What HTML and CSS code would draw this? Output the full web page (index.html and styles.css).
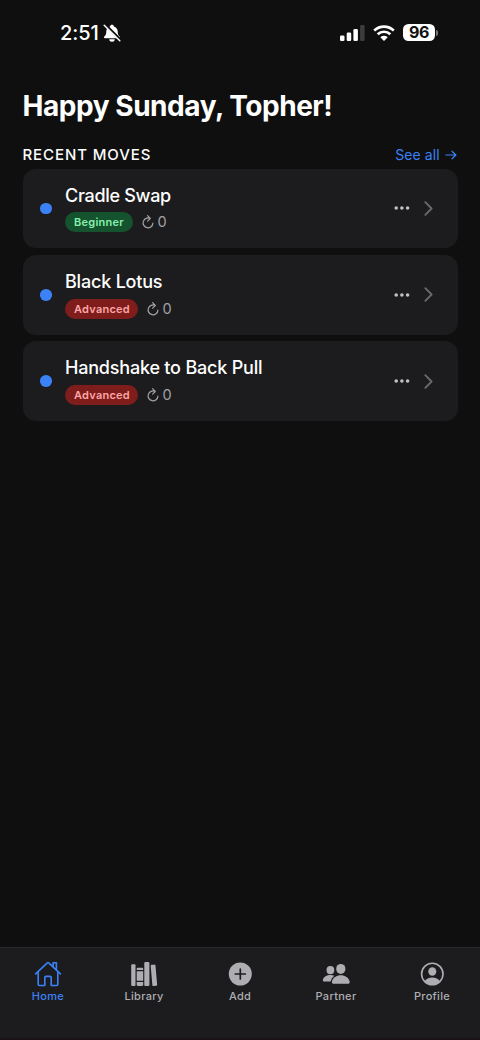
FILE: index.html
```html
<!DOCTYPE html>
<html lang="en">
<head>
<meta charset="utf-8">
<title>Home</title>
<link rel="stylesheet" href="styles.css">
</head>
<body>
<div class="app">
  <header class="status">
    <div class="clock"><span class="time">2:51</span>
      <svg class="bell" viewBox="0 0 18 18"><path d="M9 .8c-1 0-1.800.6-1.900 1.600C4.800 3.200 3.300 5 3.300 7.300c0 3.400-.9 4-2 5.300-.7.900-.3 1.700.7 1.700h14c1 0 1.400-.8.7-1.700-1.100-1.300-2-1.900-2-5.300 0-2.300-1.500-4.100-3.800-4.900C10.800 1.400 10 .8 9 .8zM6.300 15.200a2.700 2.500 0 0 0 5.400 0z" fill="#fff"/><path d="M1.900.5 17.200 15.800" stroke="#0f0f0f" stroke-width="3"/><path d="M1.200 1.200 16.800 16.800" stroke="#fff" stroke-width="1.500" stroke-linecap="round"/></svg>
    </div>
    <div class="signals">
      <svg class="bars" viewBox="0 0 25 16"><g fill="#fff"><rect x="0" y="10.500" width="4.500" height="5.500" rx="1.300"/><rect x="6.700" y="7.500" width="4.500" height="8.500" rx="1.300"/><rect x="13.400" y="4" width="4.500" height="12" rx="1.300"/></g><rect x="20.100" y="0" width="4.500" height="16" rx="1.300" fill="#3d3d3e"/></svg>
      <svg class="wifi" viewBox="0 0 22 16"><g fill="none" stroke="#fff" stroke-width="2.700"><path d="M1.200 5.600a14 14 0 0 1 19.600 0"/><path d="M4.700 9.300a9 9 0 0 1 12.600 0"/></g><path d="M7.300 12.300a5.400 5.400 0 0 1 7.400 0L11 16z" fill="#fff"/></svg>
      <div class="battery"><span class="level">96</span><i class="cap"></i></div>
    </div>
  </header>

  <main class="content">
    <h1 class="greeting">Happy Sunday, Topher!</h1>
    <div class="section-head">
      <h2 class="section-title">RECENT MOVES</h2>
      <a class="see-all">See all <svg class="arrow" viewBox="0 0 12 10"><path d="M.8 5h10M7 1.200 10.900 5 7 8.800" fill="none" stroke="currentColor" stroke-width="1.200" stroke-linecap="round" stroke-linejoin="round"/></svg></a>
    </div>
    <div class="moves">
      <article class="move">
        <i class="dot"></i>
        <div class="info">
          <h3 class="name cradle">Cradle Swap</h3>
          <div class="meta"><span class="badge beginner">Beginner</span><svg class="reload" viewBox="0 0 12 14"><path d="M8.200 3.500A4.900 4.900 0 1 0 10.900 8.100M5.600.7l2.700 2.800-2.700 2.600" fill="none" stroke="currentColor" stroke-width="1.200" stroke-linecap="round" stroke-linejoin="round"/></svg><span class="count">0</span></div>
        </div>
        <svg class="more" viewBox="0 0 16 4"><circle cx="2.200" cy="2" r="1.800"/><circle cx="7.900" cy="2" r="1.800"/><circle cx="13.600" cy="2" r="1.800"/></svg>
        <svg class="chevron" viewBox="0 0 9 15"><path d="m1.300 1.200 6.300 6.300-6.300 6.300"/></svg>
      </article>
      <article class="move">
        <i class="dot"></i>
        <div class="info">
          <h3 class="name lotus">Black Lotus</h3>
          <div class="meta"><span class="badge advanced">Advanced</span><svg class="reload" viewBox="0 0 12 14"><path d="M8.200 3.500A4.900 4.900 0 1 0 10.900 8.100M5.600.7l2.700 2.800-2.700 2.600" fill="none" stroke="currentColor" stroke-width="1.200" stroke-linecap="round" stroke-linejoin="round"/></svg><span class="count">0</span></div>
        </div>
        <svg class="more" viewBox="0 0 16 4"><circle cx="2.200" cy="2" r="1.800"/><circle cx="7.900" cy="2" r="1.800"/><circle cx="13.600" cy="2" r="1.800"/></svg>
        <svg class="chevron" viewBox="0 0 9 15"><path d="m1.300 1.200 6.300 6.300-6.300 6.300"/></svg>
      </article>
      <article class="move">
        <i class="dot"></i>
        <div class="info">
          <h3 class="name handshake">Handshake to Back Pull</h3>
          <div class="meta"><span class="badge advanced">Advanced</span><svg class="reload" viewBox="0 0 12 14"><path d="M8.200 3.500A4.900 4.900 0 1 0 10.900 8.100M5.600.7l2.700 2.800-2.700 2.600" fill="none" stroke="currentColor" stroke-width="1.200" stroke-linecap="round" stroke-linejoin="round"/></svg><span class="count">0</span></div>
        </div>
        <svg class="more" viewBox="0 0 16 4"><circle cx="2.200" cy="2" r="1.800"/><circle cx="7.900" cy="2" r="1.800"/><circle cx="13.600" cy="2" r="1.800"/></svg>
        <svg class="chevron" viewBox="0 0 9 15"><path d="m1.300 1.200 6.300 6.300-6.300 6.300"/></svg>
      </article>
    </div>
  </main>

  <nav class="tabs">
    <a class="tab active">
      <svg class="icon" viewBox="0 0 28 28"><g fill="none" stroke="currentColor" stroke-width="1.600" stroke-linejoin="round" stroke-linecap="round"><path d="M4.200 12.500v11.800c0 .7.500 1.200 1.200 1.200h5.400v-7.900c0-.7.500-1.200 1.200-1.200h4c.7 0 1.200.5 1.200 1.200v7.900h5.400c.7 0 1.200-.5 1.200-1.200V12.500"/><path d="M1.600 13.900 13.300 2.800c.4-.4 1-.4 1.400 0l11.700 11.100M19.100 7V2.800h3.300v7.300"/></g></svg>
      <span>Home</span>
    </a>
    <a class="tab">
      <svg class="icon" viewBox="0 0 28 28"><g fill="currentColor"><rect x="1.200" y="4.300" width="4.300" height="21.700" rx="1"/><path d="M6.700 10V9c0-.7.500-1.200 1.200-1.200H12c.7 0 1.200.5 1.200 1.200v1zM6.700 11.300h6.500v9.500H6.700zM6.700 22h6.500v2.800c0 .7-.5 1.200-1.200 1.200H7.900c-.7 0-1.200-.5-1.200-1.200z"/><rect x="14.300" y="2" width="5.100" height="24" rx="1"/><rect x="21.500" y="4.700" width="4.800" height="21.300" rx="1" transform="rotate(-5 24 15)"/></g></svg>
      <span>Library</span>
    </a>
    <a class="tab">
      <svg class="icon" viewBox="0 0 28 28"><circle cx="14.300" cy="14" r="11.500" fill="currentColor"/><path d="M14.300 9v10M9.300 14h10" stroke="#1c1c1e" stroke-width="1.700" stroke-linecap="round"/></svg>
      <span>Add</span>
    </a>
    <a class="tab">
      <svg class="icon" viewBox="0 0 28 28"><g fill="currentColor"><ellipse cx="18.800" cy="8.900" rx="4.600" ry="5"/><path d="M18.800 15.200c-4.100 0-8.100 2.300-8.900 6.600-.1.900.3 1.900 1.200 1.900h15.400c.9 0 1.300-1 1.200-1.900-.8-4.300-4.800-6.600-8.900-6.600z"/><ellipse cx="8.400" cy="10.100" rx="3.900" ry="4.200"/><path d="M12.300 15.800c-1.200-.5-2.500-.7-3.900-.7-3.500 0-6.900 1.700-7.500 4.800-.1.800.3 1.500 1 1.500h6.800c.4-2.300 1.800-4.200 3.600-5.600z"/></g></svg>
      <span>Partner</span>
    </a>
    <a class="tab">
      <svg class="icon" viewBox="0 0 28 28"><circle cx="14.300" cy="14" r="10.700" fill="none" stroke="currentColor" stroke-width="1.600"/><ellipse cx="14.300" cy="11.500" rx="4" ry="4.300" fill="currentColor"/><path d="M6.600 21.300c1.200-2.300 4.500-3.700 7.700-3.700s6.500 1.400 7.700 3.700a10.700 10.700 0 0 1-15.400 0z" fill="currentColor"/></svg>
      <span>Profile</span>
    </a>
  </nav>
</div>
</body>
</html>
```
FILE: styles.css
```css
* { box-sizing: border-box; }
body { margin: 0; background: #0f0f0f; color: #fff; font-family: Inter, "Liberation Sans", sans-serif; }
h1, h2, h3 { margin: 0; font-weight: 600; }
svg { display: block; flex: none; overflow: visible; }
.app { width: 480px; height: 1040px; display: flex; flex-direction: column; overflow: hidden; }

.status { display: flex; justify-content: space-between; align-items: center; height: 65px; padding: 0 42px 0 60px; }
.clock { display: flex; align-items: center; gap: 4px; }
.time { font-size: 20px; font-weight: 500; line-height: 24px; letter-spacing: -0.1px; }
.bell { width: 18px; height: 18px; }
.signals { display: flex; align-items: center; }
.bars { width: 25px; height: 16px; margin-right: 8px; }
.wifi { width: 22px; height: 16px; margin-right: 8px; }
.battery { display: flex; align-items: center; gap: 1px; }
.level { width: 32px; height: 17px; border-radius: 5.500px; background: #fff; color: #111; font-size: 16px; font-weight: 700; line-height: 17px; text-align: center; letter-spacing: -0.3px; }
.cap { width: 2px; height: 6px; border-radius: 0 2px 2px 0; background: #77777a; }

.content { flex: 1; padding: 23px 22.500px 0; }
.greeting { font-size: 28px; font-weight: 700; line-height: 36px; letter-spacing: -0.45px; white-space: nowrap; }
.section-head { display: flex; justify-content: space-between; align-items: center; height: 20px; margin-top: 21px; }
.section-title { font-size: 15px; font-weight: 500; letter-spacing: 0.9px; line-height: 20px; }
.see-all { display: flex; align-items: center; gap: 5px; color: #3b82f6; font-size: 14px; line-height: 20px; letter-spacing: 0.1px; margin-right: 0.700px; }
.arrow { width: 12px; height: 10px; }

.moves { display: flex; flex-direction: column; gap: 6.700px; margin-top: 3.700px; }
.move { display: flex; align-items: center; height: 79.600px; padding: 0 25px 0 17.500px; border-radius: 13px; background: #1c1c1e; }
.dot { width: 11.500px; height: 11.500px; border-radius: 50%; background: #3b82f6; margin-right: 13.500px; }
.info { flex: 1; display: flex; flex-direction: column; gap: 5.500px; }
.name { font-size: 18px; font-weight: 500; line-height: 22px; letter-spacing: -0.2px; }
.cradle { letter-spacing: -0.3px; }
.meta { display: flex; align-items: center; height: 20px; }
.badge { height: 20px; line-height: 20px; border-radius: 10px; padding: 0 9px; font-size: 11px; font-weight: 600; letter-spacing: 0.25px; }
.beginner { width: 68px; background: #14532d; color: #86efac; }
.advanced { width: 73px; background: #7f1d1d; color: #fca5a5; }
.reload { width: 12px; height: 14px; margin: 0 3.500px 0 9px; color: #a1a1a6; }
.count { color: #a1a1a6; font-size: 14.500px; line-height: 20px; }
.more { width: 16px; height: 4px; fill: #c2c2c4; margin-right: 14px; }
.chevron { width: 9px; height: 15px; fill: none; stroke: #69696c; stroke-width: 1.900; stroke-linecap: round; stroke-linejoin: round; }

.tabs { display: grid; grid-template-columns: repeat(5, 1fr); height: 93px; border-top: 1px solid #29292c; border-bottom: 2px solid #1b1219; background: #1c1c1e; padding-top: 12px; }
.tab { display: flex; flex-direction: column; align-items: center; color: #aeaeb2; font-size: 11px; font-weight: 500; line-height: 14px; letter-spacing: 0.3px; gap: 1px; }
.tab.active { color: #3b82f6; }
.icon { width: 28px; height: 28px; }
```
